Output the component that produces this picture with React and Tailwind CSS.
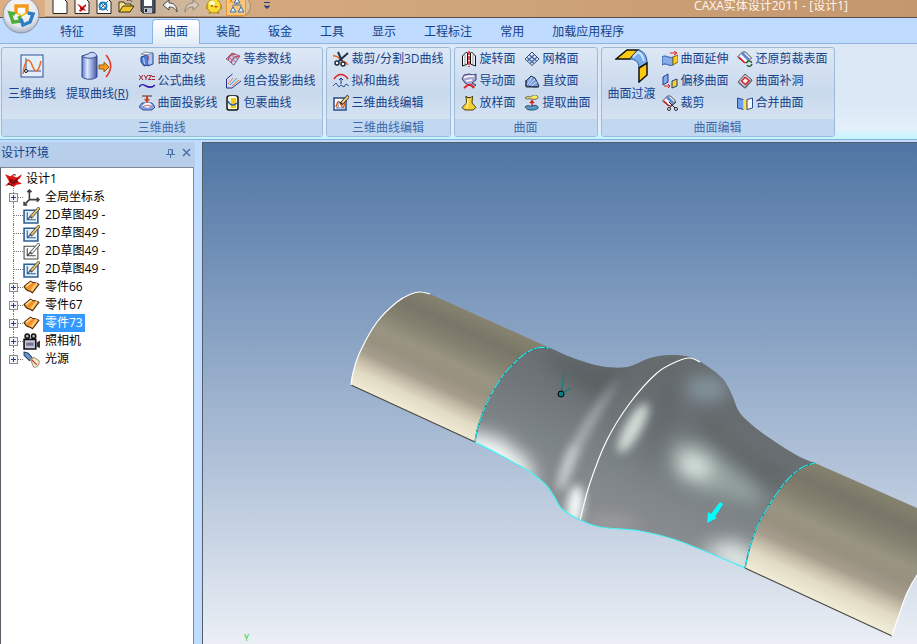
import { ChevronDown } from 'lucide-react';

// turns a list of points into a smooth curve through all of them
function curve(points) {
  let d = '';
  for (let i = 0; i < points.length - 1; i++) {
    const p0 = points[i - 1] || points[i];
    const p1 = points[i];
    const p2 = points[i + 1];
    const p3 = points[i + 2] || p2;
    d += ` C ${p1[0] + (p2[0] - p0[0]) / 6} ${p1[1] + (p2[1] - p0[1]) / 6}`;
    d += ` ${p2[0] - (p3[0] - p1[0]) / 6} ${p2[1] - (p3[1] - p1[1]) / 6}`;
    d += ` ${p2[0]} ${p2[1]}`;
  }
  return d;
}

const start = (points) => `M ${points[0][0]} ${points[0][1]}`;

const icons = {
  newDoc: (
    <path d="M1 0h10l4 4v11.500H1z" fill="#fdfdfd" stroke="#222" />
  ),
  newDesign: (
    <>
      <path d="M1 0h10l4 4v11.500H1z" fill="#fdfdfd" stroke="#222" />
      <path d="M3 6l3 1 2 2 4-3v2l-2 2 2 3-3-1-3 2-1-2 2-1-2-3z" fill="#d40b0b" />
      <path d="M6 10l3 1" stroke="#600" />
    </>
  ),
  newDrawing: (
    <>
      <path d="M1 0h10l4 4v11.500H1z" fill="#fdfdfd" stroke="#222" />
      <circle cx="7" cy="8" r="3.500" fill="none" stroke="#1583c5" strokeWidth="2" />
      <path d="M3 12l9-9M4 4l8 9" stroke="#28628e" />
    </>
  ),
  open: (
    <>
      <path d="M1 14V4h5l1 2h6v3" fill="#f7e38b" stroke="#3b3515" />
      <path d="M1 14l4-6h11l-4 6z" fill="#f3c52d" stroke="#3b3515" />
      <path d="M9 3c2-2 4-1 5 1" fill="none" stroke="#333" />
    </>
  ),
  save: (
    <>
      <path d="M1 1h14v14H3l-2-2z" fill="#4b5060" stroke="#22242c" />
      <path d="M4 2h8v6H4z" fill="#fff" />
      <path d="M4 10h8v5H4z" fill="#b9c0ce" />
      <path d="M5 11h2v3H5z" fill="#22242c" />
    </>
  ),
  undo: (
    <path d="M1 7l6-5v3c5 0 8 3 8 9-2-4-4-5-8-5v3z" fill="#f4f4f4" stroke="#4e4a4a" />
  ),
  redo: (
    <path d="M15 7L9 2v3c-5 0-8 3-8 9 2-4 4-5 8-5v3z" fill="#d9c9b9" stroke="#8f8579" />
  ),
  chick: (
    <>
      <path d="M1 11l-1-2 2-2M15 11l1-2-2-2M5 14l-2 2M11 14l2 2" stroke="#c08c12" strokeWidth="2" />
      <circle cx="8" cy="8" r="7" fill="#f8dc35" stroke="#b08c18" />
      <ellipse cx="6" cy="5" rx="3" ry="2" fill="#fffbd2" />
      <path d="M8 8h4l-2 2z" fill="#d5452a" />
      <path d="M6 7v2" stroke="#473a0c" />
    </>
  ),
  tree: (
    <>
      <path d="M9 3v4M5 7h8M5 7v4M13 7v4" fill="none" stroke="#4f79a8" />
      <path d="M9 0l3 5H6zM5 9l3 5H2zM13 9l3 5h-6z" fill="#d9ecf8" stroke="#3f6fa3" />
      <path d="M1 1l4 4M5 1L1 5" stroke="#e88a1a" />
    </>
  ),
  intersect: (
    <>
      <path d="M7 3l7-1v11l-5 2z" fill="#a8c5f5" stroke="#27408b" />
      <path d="M2 6l6-2c3 3-1 6 1 10l-4 1-3-4z" fill="#4f7fd8" stroke="#27408b" />
      <path d="M2 3l4-2 8 1-6 2z" fill="#f1f3fa" stroke="#8a90a5" />
      <path d="M4 7c2 1 0 4 2 6" fill="none" stroke="#d5e4ff" />
      <path d="M8 4c3 3-1 6 1 10" fill="none" stroke="#e3413a" />
    </>
  ),
  formula: (
    <>
      <path d="M0 2l4 5M4 2L0 7M5 2l2 3 2-3M7 5v2M9.500 2.500h3l-3 4h3M13 3.500h3M13 6.500h3" fill="none" stroke="#a31a2b" />
      <path d="M0 14c3-4 5-2 7-1s6 2 9-1" fill="none" stroke="#3414ad" strokeWidth="1.500" />
    </>
  ),
  project: (
    <>
      <path d="M0 12l3-4h10l3 4-3 3H4z" fill="#84a1e2" stroke="#3c4f94" />
      <path d="M3 11l3-3h5l2 2-4 3z" fill="#f0f4fd" />
      <path d="M4 12c2-2 5-2 8-1" stroke="#dd5b5b" fill="none" />
      <path d="M3 1h10" stroke="#6b2413" />
      <path d="M8 1v4" stroke="#c1401a" strokeWidth="2" />
      <path d="M5 4h6L8 8z" fill="#d0461c" />
    </>
  ),
  isoParam: (
    <>
      <path d="M1 8l6-6 8 3-6 9c-3-1-3-4-8-6z" fill="#d6cbe6" stroke="#7a6892" />
      <path d="M3 9c1-4 4-6 7-6M6 12c1-5 4-6 8-7" fill="none" stroke="#cf4747" strokeWidth="1.500" />
      <path d="M3 6l8 5M6 4l7 4" stroke="#8d7cb4" />
    </>
  ),
  comboProject: (
    <>
      <path d="M1.500 15V6l6-5M1.500 15H7l9-7" fill="none" stroke="#22328c" />
      <path d="M2 14V7l5-4M2 14h5l7-5z" fill="#dcd6f3" />
      <path d="M3 11l5-6" stroke="#e07a3a" />
      <path d="M5 12l7-7" stroke="#3ba2c4" />
      <path d="M7 13l7-6" stroke="#e07a3a" />
    </>
  ),
  wrap: (
    <>
      <rect x="2" y="1" width="11" height="14" rx="2" fill="#fbf7cf" stroke="#111" strokeWidth="1.500" />
      <path d="M6 3h5v10H6z" fill="#efc920" />
      <path d="M3 6c2 5 6 5 9 2" fill="none" stroke="#2e62a5" strokeWidth="1.500" />
      <ellipse cx="7.500" cy="2" rx="4" ry="1" fill="#fff" />
    </>
  ),
  cut3d: (
    <>
      <path d="M0 5c4-1 6 2 8 4s5 1 7 5" fill="none" stroke="#e16b1e" strokeWidth="1.500" />
      <path d="M5 1l4 9M15 2L6 10" stroke="#23324a" strokeWidth="2" />
      <circle cx="4" cy="12" r="2" fill="#fff" stroke="#1d2a3d" strokeWidth="1.500" />
      <circle cx="10" cy="13" r="2" fill="#fff" stroke="#1d2a3d" strokeWidth="1.500" />
    </>
  ),
  fit: (
    <>
      <path d="M1 6c4-6 10-6 14 0" fill="none" stroke="#e01f1f" strokeWidth="1.500" />
      <path d="M0 13l3-3 3 4 2-2 3 2 2-3 3 2" fill="none" stroke="#2d5490" />
      <path d="M8 11V5M6 7l2-2 2 2" fill="none" stroke="#1c3d86" />
    </>
  ),
  edit3d: (
    <>
      <rect x="1" y="3" width="12" height="12" fill="#fff" stroke="#2a4a86" strokeWidth="1.500" />
      <path d="M3 12c2-8 3-6 5-2s3 2 4-3" fill="none" stroke="#e1641a" strokeWidth="1.500" />
      <path d="M3 13h9M5 6v7" stroke="#5b7db5" />
      <path d="M15.500 1L8 9" stroke="#222" strokeWidth="3.500" />
      <path d="M15 1.500L9 8" stroke="#f5d27c" strokeWidth="2" />
    </>
  ),
  revolve: (
    <>
      <path d="M1.500 5l4-4 1 1v11l-5 2zM14.500 5l-4-4-1 1v11l5 2z" fill="#f3f6fc" stroke="#111" />
      <path d="M4 4v9M12 4v9" stroke="#999" />
      <path d="M8 0v16" stroke="#f01818" strokeWidth="1.500" strokeDasharray="4 1" />
    </>
  ),
  sweep: (
    <>
      <path d="M1 6l2-4 5-1 4 1 3-1v6l-4 3 4 2-3 2-8-4-2-3z" fill="#aaa6d6" stroke="#44406d" />
      <path d="M3 5c3-3 6-1 10-2M5 8l6-1" fill="none" stroke="#fff" strokeWidth="1.500" />
      <path d="M3 15l4-3h3l3 3" fill="none" stroke="#e3231f" strokeWidth="2" />
    </>
  ),
  loft: (
    <>
      <path d="M5 1l1 1.500h4L11.500 1 11 8l4 4.500L12 15H4l-3-2.500L5.500 8z" fill="#f4cf35" stroke="#4a3c08" />
      <path d="M7 4l-1 9" stroke="#fdf1a3" strokeWidth="1.500" />
    </>
  ),
  mesh: (
    <>
      <path d="M1 8l7-7 7 7-7 6.500z" fill="#e3ecfa" stroke="#3d4e70" />
      <path d="M3 6.500l7 6M5.500 4l7 6M3.500 10l7-6.500M6 12.500l7-6.500" stroke="#466ca8" strokeWidth="1.500" />
    </>
  ),
  ruled: (
    <>
      <path d="M2 8l5-5 4 2 4 8-3 1-10-1z" fill="#7aa0e0" stroke="#232f4b" />
      <path d="M3 12l5-8M5 12l6-6M7 13l6-4" stroke="#c9dafa" />
      <path d="M2 7v7h13" stroke="#232f4b" />
    </>
  ),
  extractFace: (
    <>
      <path d="M1 3c3-3 5 0 7-2s5-1 6 1-4 3-7 2-4 1-6-1z" fill="#f7ea5c" stroke="#666" />
      <path d="M8 5v6M6 8l2-2 2 2" fill="none" stroke="#e01f1f" strokeWidth="1.500" />
      <path d="M1 12c3-3 5 0 7-1s5-1 6 1-3 3-6 3-5 0-7-3z" fill="#5c9ac2" stroke="#1f4f71" />
    </>
  ),
  extend: (
    <>
      <path d="M0 6c4-3 7 2 11 0v8c-4 2-7-3-11 0z" fill="#86aeea" stroke="#274fa0" />
      <path d="M11 6l5-2v7l-5 3z" fill="#fbcf1c" stroke="#8a6a00" />
      <path d="M8 2h6M12 0l3 2-3 2" fill="none" stroke="#e01f1f" />
    </>
  ),
  offset: (
    <>
      <path d="M1 4l5-3v8l-5 3z" fill="#86aeea" stroke="#1f3d8c" />
      <path d="M10 8l5-2v7l-5 2z" fill="#fbcf1c" stroke="#1f3d8c" />
      <path d="M2 13h6M6 11l2 2-2 2" fill="none" stroke="#e01f1f" />
    </>
  ),
  trim: (
    <>
      <path d="M0.500 6l5-5h3l5 5-5 5-3-1z" fill="#f4f6fc" stroke="#444" />
      <path d="M5 2l6 6" stroke="#5f8ad4" strokeWidth="3" />
      <path d="M2 6l5 5" stroke="#e01f1f" strokeWidth="1.500" />
      <path d="M7 7l6 6M14 7l-7 6" stroke="#222" />
      <circle cx="7" cy="14" r="1.500" fill="#fff" stroke="#222" />
      <circle cx="14" cy="14" r="1.500" fill="#fff" stroke="#222" />
    </>
  ),
  restore: (
    <>
      <path d="M0.500 6l5-5h3l6 6-5 5-3-1z" fill="#fbfbff" stroke="#444" />
      <path d="M5 2l7 7" stroke="#5f8ad4" strokeWidth="3" />
      <path d="M2 6l6 6" stroke="#e01f1f" strokeWidth="1.500" />
      <path d="M9.500 12c1-3 5-2 5 0M15 13c-1 3-4 3-5 1" fill="none" stroke="#27622c" strokeWidth="1.500" />
    </>
  ),
  hole: (
    <>
      <path d="M1 9l7-8 7 6-7 8z" fill="#c4cbe0" stroke="#555" />
      <path d="M1 9l7 6M8 15l7-8" stroke="#6b6b76" strokeWidth="1.500" />
      <path d="M4.500 8L8 4.500l4 3-3.500 4z" fill="#fff" stroke="#d92222" strokeWidth="1.500" />
    </>
  ),
  merge: (
    <>
      <path d="M0.500 3l6 1.500v10l-6-1.500z" fill="#6c9ff0" stroke="#2b4b91" />
      <path d="M6 4.500h4v10H6z" fill="#fbcf1c" />
      <path d="M10 4.500L15.500 3v10L10 14.500z" fill="#f2f7ff" stroke="#2b4b91" />
      <path d="M8 4v10" stroke="#fdf09a" />
    </>
  ),
  design: (
    <>
      <path d="M0 3l5 2 3-2v2l3 1 5-3-2 4-3 2 5 3-5 1-3 2-3-2-5 1 4-4z" fill="#e01717" />
      <path d="M4 6l4 3 4-3v4l-4 3-4-3z" fill="#8d0d0d" />
      <path d="M8 3l2 1M3 12l4 2" stroke="#1b1b1b" />
    </>
  ),
  axes: (
    <path d="M6 1v9h9M6 10l-4 4M4 3l2-2 2 2M13 8l2 2-2 2M1 12v3h3" fill="none" stroke="#3f3f3f" strokeWidth="1.500" />
  ),
  sketch: (
    <>
      <path d="M1 3h13v12H1z" fill="#e3f0fa" stroke="#2d5f94" strokeWidth="1.500" />
      <path d="M4 5v7h8M4 12l4-4" fill="none" stroke="#2d5f94" />
      <path d="M15.500 0.500L7 10" stroke="#5a5346" strokeWidth="3" />
      <path d="M15 1L8 9" stroke="#f3cb72" strokeWidth="1.500" />
    </>
  ),
  sketchHidden: (
    <>
      <path d="M1 3h13v12H1z" fill="#fff" stroke="#444" />
      <path d="M4 5v7h8M4 12l4-4" fill="none" stroke="#444" />
      <path d="M15.500 0.500L7 10" stroke="#555" strokeWidth="3" />
      <path d="M15 1L8 9" stroke="#fff" strokeWidth="1.500" />
    </>
  ),
  part: (
    <>
      <path d="M1 7l6-5c3 3 5 0 8 3l-6 8c-3-3-5 0-8-6z" fill="#f59f2e" stroke="#4b2a0c" />
      <path d="M3 7l5-4M8 11l5-7" stroke="#fdd38a" strokeWidth="1.500" />
      <path d="M5 9l5-5" stroke="#ee7f3a" />
    </>
  ),
  camera: (
    <>
      <circle cx="4" cy="3" r="2" fill="#bbb" stroke="#111" strokeWidth="1.500" />
      <circle cx="10" cy="3" r="2" fill="#bbb" stroke="#111" strokeWidth="1.500" />
      <path d="M1 6h11v9H1z" fill="#c7c5dc" stroke="#111" strokeWidth="1.500" />
      <path d="M3 9h7v3H3z" fill="#77748f" />
      <path d="M13 9l3-2v7l-3-1z" fill="#333" />
    </>
  ),
  light: (
    <>
      <path d="M1 1l4 1 4 5-3 2-5-5z" fill="#6f97c9" stroke="#1f3f6d" />
      <path d="M7 8l3-2 5 3c1 4-2 7-5 6z" fill="#f6ecc9" stroke="#9f9778" />
      <path d="M8 8l5 5" stroke="#c43030" />
    </>
  ),
};

function Icon({ name, className = 'size-4' }) {
  return (
    <svg viewBox="0 0 16 16" className={`${className} shrink-0`} fill="none" aria-hidden="true">
      {icons[name]}
    </svg>
  );
}

const quickAccess = [
  ['newDoc', '新建'],
  ['newDesign', '新建设计'],
  ['newDrawing', '新建图纸'],
  ['open', '打开'],
  ['save', '保存'],
  ['undo', '撤销'],
  ['redo', '重做'],
  ['chick', '三维球'],
];

const tabs = ['特征', '草图', '曲面', '装配', '钣金', '工具', '显示', '工程标注', '常用', '加载应用程序'];

const treeItems = [
  { icon: 'axes', label: '全局坐标系', expandable: true },
  { icon: 'sketch', label: '2D草图49 -' },
  { icon: 'sketch', label: '2D草图49 -' },
  { icon: 'sketchHidden', label: '2D草图49 -' },
  { icon: 'sketch', label: '2D草图49 -' },
  { icon: 'part', label: '零件66', expandable: true },
  { icon: 'part', label: '零件67', expandable: true },
  { icon: 'part', label: '零件73', expandable: true, selected: true },
  { icon: 'camera', label: '照相机', expandable: true },
  { icon: 'light', label: '光源', expandable: true },
];

function Group({ title, children }) {
  return (
    <section className="flex shrink-0 flex-col overflow-hidden rounded-[3px] border border-[#9dbbd9] bg-linear-to-b from-[#dde8f5] via-[#c9d9ed] to-[#dce8f5]">
      <div className="flex px-[6px] pb-[5px]">{children}</div>
      <h2 className="h-[17px] bg-[#c1d8f0] text-center leading-[17px] text-[#3e6aaa]">{title}</h2>
    </section>
  );
}

function BigButton({ label, children }) {
  return (
    <button type="button" className="flex flex-col items-center whitespace-nowrap">
      <span className="flex h-9 items-center">{children}</span>
      <span className="leading-5">{label}</span>
    </button>
  );
}

function Column({ items }) {
  return (
    <div className="flex flex-col">
      {items.map(([icon, label]) => (
        <button key={label} type="button" className="flex h-[22px] items-center gap-[3px] whitespace-nowrap">
          <Icon name={icon} />
          {label}
        </button>
      ))}
    </div>
  );
}

function AppLogo() {
  return (
    <svg viewBox="0 0 38 38" className="size-[38px]" aria-hidden="true">
      <defs>
        <radialGradient id="orb" cx="0.5" cy="0.35" r="0.65">
          <stop offset="0" stopColor="#ffffff" />
          <stop offset="0.7" stopColor="#e4e7ee" />
          <stop offset="1" stopColor="#a9b1c2" />
        </radialGradient>
      </defs>
      <circle cx="19" cy="18" r="18" fill="url(#orb)" stroke="#8e95a8" />
      <g fill="none" strokeWidth="3.500">
        <path d="M14 17V9h11v8" stroke="#f39a1b" />
        <path d="M15 16l4.500 3 4.500-3" stroke="#f8c531" strokeWidth="2" />
        <path d="M13 17l-5-1 3 9 8-1-2-5" stroke="#4fae3c" />
        <path d="M26 16l5 1-3 8-7 3-2-6" stroke="#2a7dc6" />
      </g>
    </svg>
  );
}

function TitleBar() {
  return (
    <header className="flex h-[18px] items-end overflow-hidden border-b border-[#5d4c45] bg-linear-to-r from-[#dcae84] via-[#cfa57b] to-[#c4976d] pl-[45px]">
      <div className="flex shrink-0 items-end rounded-r-full border-r border-b border-[#a98c70] bg-linear-to-r from-[#dfc4a8] via-[#c9b29b] to-[#dcbd9a] pr-1 pl-[7px]">
        <div className="flex items-end gap-[6px] pb-[2px]">
          {quickAccess.map(([icon, label]) => (
            <button key={icon} type="button" aria-label={label}>
              <Icon name={icon} />
            </button>
          ))}
        </div>
        <button type="button" aria-label="设计树" className="ml-1 flex h-5 w-5 items-center justify-center border border-[#e39a3d] bg-[#fbc679]">
          <Icon name="tree" />
        </button>
      </div>
      <button type="button" aria-label="自定义快速访问工具栏" className="ml-3 flex flex-col items-center self-start pt-[2px] text-[#1d3f86]">
        <span className="h-px w-[6px] bg-[#1d3f86]" />
        <ChevronDown className="size-2" strokeWidth={5} fill="currentColor" />
      </button>
      <h1 className="ml-auto self-start pr-[69px] leading-3 whitespace-nowrap text-[#fff6ee]">
        CAXA实体设计2011 - [设计1]
      </h1>
    </header>
  );
}

function Ribbon() {
  return (
    <div className="flex gap-[3px] border-b border-[#8fb0da] bg-linear-to-b from-[#dce8f5] from-60% via-[#e3f0fb] via-90% to-[#bff6ff] px-px pt-[3px] pb-[2px] text-[#15428b]">
      <Group title="三维曲线">
        <div className="flex gap-[10px]">
          <BigButton label="三维曲线">
            <svg viewBox="0 0 24 24" className="size-6" fill="none" aria-hidden="true">
              <rect x="1" y="1" width="22" height="22" fill="#e4eef9" stroke="#2a5298" />
              <path d="M6 4v14M6 17h15" stroke="#2a5298" />
              <path d="M3 20C5 4 9 3 12 11s6 9 9-4" stroke="#ee6b23" strokeWidth="1.500" />
              <circle cx="6" cy="17" r="1.500" fill="#fff" stroke="#111" />
            </svg>
          </BigButton>
          <BigButton label={<>提取曲线(<u>R</u>)</>}>
            <svg viewBox="0 0 32 30" className="h-[30px] w-8" fill="none" aria-hidden="true">
              <defs>
                <linearGradient id="tube">
                  <stop offset="0" stopColor="#5a78cc" />
                  <stop offset="0.35" stopColor="#dfe9ff" />
                  <stop offset="1" stopColor="#3f58a8" />
                </linearGradient>
              </defs>
              <path d="M1 5v21c4 3 11 3 15 0V5z" fill="url(#tube)" stroke="#33488c" />
              <path d="M1 5l6-2c4-3 7-2 9 2-4 3-11 3-15 0z" fill="#c7d6f6" stroke="#33488c" />
              <path d="M25 4c6 7 6 15 0 22" stroke="#e13322" strokeWidth="1.500" />
              <path d="M18 14h5v-3l5 5-5 5v-3h-5z" fill="#f39b1c" stroke="#9a5d08" />
            </svg>
          </BigButton>
          <div className="flex gap-[7px]">
            <Column items={[['intersect', '曲面交线'], ['formula', '公式曲线'], ['project', '曲面投影线']]} />
            <Column items={[['isoParam', '等参数线'], ['comboProject', '组合投影曲线'], ['wrap', '包裹曲线']]} />
          </div>
        </div>
      </Group>
      <Group title="三维曲线编辑">
        <Column items={[['cut3d', '裁剪/分割3D曲线'], ['fit', '拟和曲线'], ['edit3d', '三维曲线编辑']]} />
      </Group>
      <Group title="曲面">
        <div className="flex gap-2">
          <Column items={[['revolve', '旋转面'], ['sweep', '导动面'], ['loft', '放样面']]} />
          <Column items={[['mesh', '网格面'], ['ruled', '直纹面'], ['extractFace', '提取曲面']]} />
        </div>
      </Group>
      <Group title="曲面编辑">
        <div className="flex gap-[6px]">
          <BigButton label="曲面过渡">
            <svg viewBox="0 0 34 34" className="size-[34px]" fill="none" aria-hidden="true">
              <path d="M1 10L12 1h11l-8 9z" fill="#fbc90f" stroke="#111" strokeWidth="1.500" />
              <path d="M15 10l8-9c6 1 9 6 9 13l-8 5c0-6-4-9-9-9z" fill="#79aceb" stroke="#2c5798" />
              <path d="M18 8l5-5c4 2 5 5 6 9" stroke="#c9e2ff" strokeWidth="2" />
              <path d="M24 19l8-5v12l-8 7z" fill="#fbc90f" stroke="#111" strokeWidth="1.500" />
            </svg>
          </BigButton>
          <div className="flex gap-2">
            <Column items={[['extend', '曲面延伸'], ['offset', '偏移曲面'], ['trim', '裁剪']]} />
            <Column items={[['restore', '还原剪裁表面'], ['hole', '曲面补洞'], ['merge', '合并曲面']]} />
          </div>
        </div>
      </Group>
    </div>
  );
}

function DesignTree() {
  return (
    <aside className="flex w-[195px] shrink-0 flex-col">
      <div className="flex h-[25px] items-center bg-[#b7cfea] pr-px pl-px text-[#15428b]">
        <h2 className="grow pb-[3px]">设计环境</h2>
        <button type="button" aria-label="自动隐藏" className="flex size-4 items-center justify-center pb-1">
          <svg viewBox="0 0 9 10" className="h-[10px] w-[9px]" fill="none" stroke="#4a70a9" aria-hidden="true">
            <path d="M2.500 6V1.500h4V6M6 2v4M0 6.500h9M4.500 7v3" />
          </svg>
        </button>
        <button type="button" aria-label="关闭" className="flex size-4 items-center justify-center pb-1">
          <svg viewBox="0 0 9 9" className="size-[9px]" fill="none" stroke="#4a70a9" strokeWidth="1.500" aria-hidden="true">
            <path d="M1 1l7 7M8 1L1 8" />
          </svg>
        </button>
      </div>
      <div className="mr-px grow border border-b-0 border-[#84888f] border-l-[#5a5f68] bg-white pt-[2px] text-black">
        <div className="flex h-[18px] items-center gap-1 pl-1">
          <Icon name="design" className="size-[17px]" />
          设计1
        </div>
        <ul>
          {treeItems.map((item, i) => (
            <li key={i} className="flex h-[18px] items-center">
              <span className="flex h-full w-[22px] shrink-0 items-center pl-2">
                {item.expandable ? (
                  <span className="flex h-full flex-col items-center">
                    <span className="grow border-l border-dotted border-[#777]" />
                    <button
                      type="button"
                      aria-label={`展开 ${item.label}`}
                      className="flex size-[9px] items-center justify-center border border-[#8e8e8e] bg-[#f4f4f8]"
                    >
                      <svg viewBox="0 0 5 5" className="size-[5px]" stroke="#27417c" aria-hidden="true">
                        <path d="M0 2.500h5M2.500 0v5" />
                      </svg>
                    </button>
                    <span
                      className={`grow border-l border-dotted ${
                        i === treeItems.length - 1 ? 'border-transparent' : 'border-[#777]'
                      }`}
                    />
                  </span>
                ) : (
                  <span className="ml-1 h-full border-l border-dotted border-[#777]" />
                )}
                <span className="grow border-t border-dotted border-[#777]" />
              </span>
              <Icon name={item.icon} className="size-[17px]" />
              <span className={`ml-[3px] px-[2px] leading-[18px] ${item.selected ? 'bg-[#3399ff] text-white' : ''}`}>
                {item.label}
              </span>
            </li>
          ))}
        </ul>
      </div>
    </aside>
  );
}

const leftEnd = [[351, 385], [353, 373], [360, 352], [377, 322], [397, 302], [411, 294], [420, 292], [430, 294]];
const leftSeam = [[475, 442], [478, 427], [487, 403], [502, 377], [522, 356], [537, 348], [550, 348]];
const upperEdge = [
  [550, 348], [573, 358], [600, 366], [627, 367], [650, 358], [670, 355], [690, 357], [707, 366],
  [723, 379], [732, 395], [740, 413], [757, 429], [780, 445], [800, 457], [815, 463],
];
const rightSeam = [[745, 568], [750, 547], [758, 525], [773, 499], [788, 479], [803, 467], [815, 463]];
const lowerEdge = [
  [475, 442], [500, 455], [530, 472], [546, 485], [555, 498], [562, 509], [580, 520], [600, 527],
  [640, 531], [673, 539], [707, 552], [745, 568],
];
const profile = [[580, 520], [590, 483], [607, 440], [630, 403], [657, 373], [678, 361], [690, 358], [700, 362]];
const rightEnd = [[892, 636], [898, 618], [907, 593], [919, 572], [935, 552]];

const reversed = (points) => [...points].reverse();

const bodyPath = `${start(leftSeam)}${curve(leftSeam)}${curve(upperEdge)}${curve(reversed(rightSeam))}${curve(reversed(lowerEdge))}Z`;
const leftTube = `${start(leftEnd)}${curve(leftEnd)} L 550 348 ${curve(reversed(leftSeam))}Z`;
const rightTube = `${start(rightSeam)}${curve(rightSeam)} L 935 516 L 935 552 ${curve(reversed(rightEnd))}Z`;

const tubeStops = (
  <>
    <stop offset="0" stopColor="#85836f" />
    <stop offset="0.16" stopColor="#797568" />
    <stop offset="0.3" stopColor="#858170" />
    <stop offset="0.46" stopColor="#999582" />
    <stop offset="0.58" stopColor="#979180" />
    <stop offset="0.7" stopColor="#a79d8d" />
    <stop offset="0.79" stopColor="#c9c0ac" />
    <stop offset="0.87" stopColor="#e1dac5" />
    <stop offset="1" stopColor="#f0ebd6" />
  </>
);

function Viewport() {
  return (
    <main className="min-w-0 grow overflow-hidden border-t border-l border-[#555f6c] bg-linear-to-b from-[#4f75a4] to-[#ebeff5]">
      <svg className="size-full" role="img" aria-label="零件73">
        <defs>
          <linearGradient id="leftShade" gradientUnits="userSpaceOnUse" x1="480" y1="317" x2="431" y2="422">
            {tubeStops}
          </linearGradient>
          <linearGradient id="rightShade" gradientUnits="userSpaceOnUse" x1="850" y1="478" x2="799" y2="591">
            {tubeStops}
          </linearGradient>
          <linearGradient id="bodyShade" gradientUnits="userSpaceOnUse" x1="680" y1="385" x2="622" y2="530">
            <stop offset="0" stopColor="#666b6e" />
            <stop offset="0.35" stopColor="#6f7578" />
            <stop offset="0.65" stopColor="#7d8488" />
            <stop offset="1" stopColor="#8b8e91" />
          </linearGradient>
          <filter id="soft" filterUnits="userSpaceOnUse" x="400" y="300" width="480" height="320" colorInterpolationFilters="sRGB">
            <feGaussianBlur stdDeviation="9" />
          </filter>
          <filter id="fine" filterUnits="userSpaceOnUse" x="400" y="300" width="480" height="320" colorInterpolationFilters="sRGB">
            <feGaussianBlur stdDeviation="5" />
          </filter>
          <clipPath id="bodyClip">
            <path d={bodyPath} />
          </clipPath>
        </defs>
        <g transform="translate(-203 -143)">
          <path d={leftTube} fill="url(#leftShade)" />
          <path d={rightTube} fill="url(#rightShade)" />
          <path d={bodyPath} fill="url(#bodyShade)" />
          <g clipPath="url(#bodyClip)">
            <g filter="url(#soft)">
              <path d="M540 350 L600 366 L635 368 L600 400 L560 375Z" fill="#5b6163" />
              <path d="M700 395 L735 440 L800 475 L775 492 L705 440Z" fill="#626769" />
              <path d="M665 375 L678 400 L640 480 L655 430Z" fill="#606568" />
              <path d="M460 430 L500 438 L530 462 L535 490 L460 458Z" fill="#f4fbf9" />
              <path d="M700 548 L735 540 L765 560 L745 585Z" fill="#e0e8e6" />
              <ellipse cx="707" cy="389" rx="22" ry="13" fill="#8496a0" />
              <path d="M672 440 L704 444 L760 490 L764 506 L700 490 L676 476Z" fill="#96a4a1" />
              <ellipse cx="694" cy="466" rx="19" ry="12" fill="#dde8e2" transform="rotate(25 694 466)" />
              <ellipse cx="612" cy="524" rx="24" ry="5" fill="#aeaaa8" />
            </g>
            <g filter="url(#fine)">
              <path d="M556 492 Q562 440 622 375 Q584 436 566 488Z" fill="#a9aeb2" />
              <ellipse cx="567" cy="466" rx="5" ry="25" fill="#cfd3d6" transform="rotate(19 567 466)" />
              <ellipse cx="575" cy="506" rx="8" ry="21" fill="#f4fbf8" transform="rotate(8 575 506)" />
              <ellipse cx="633" cy="428" rx="8" ry="28" fill="#d3dfd8" transform="rotate(29 633 428)" />
            </g>
          </g>
          <g fill="none" strokeWidth="1.200">
            <path d="M351 385L475 442M745 568L892 636" stroke="#4b4a43" />
            <path d={start(leftEnd) + curve(leftEnd)} stroke="#fff" />
            <path d={start(rightEnd) + curve(rightEnd)} stroke="#fff" />
            <path d={start(profile) + curve(profile)} stroke="#fff" />
            <path d={start(lowerEdge) + curve(lowerEdge)} stroke="#49f2f5" />
            {[leftSeam, rightSeam].map((seam) => (
              <g key={seam[0][0]}>
                <path d={start(seam) + curve(seam)} stroke="#1c4b50" />
                <path d={start(seam) + curve(seam)} stroke="#2fe6ea" strokeDasharray="11 1 6 1" />
              </g>
            ))}
            <path d="M561 394L564 374M561 394L571 388" stroke="#0b8080" />
          </g>
          <circle cx="561" cy="394" r="3" fill="#008080" stroke="#000" />
          <path d="M720 502l3 2-8 13 2 1-10 5 1-11 3 2z" fill="#00ffff" />
          <text x="244" y="641" fontSize="9" fill="#1fd01f">Y</text>
        </g>
      </svg>
    </main>
  );
}

export default function App() {
  return (
    <div className="flex h-screen flex-col overflow-hidden bg-[#bfdbff] font-['Open_Sans','Noto_Sans_CJK_SC',sans-serif] text-[12px] leading-4">
      <div className="relative">
        <TitleBar />
        <nav className="flex h-[26px] items-end border-b border-[#8db2e3] pl-[46px] text-[#15428b]">
          {tabs.map((tab) => (
            <button
              key={tab}
              type="button"
              className={
                tab === '曲面'
                  ? 'mx-[2px] -mb-px h-[25px] rounded-t-[4px] border border-b-0 border-[#8db2e3] bg-linear-to-b from-white to-[#e2edf9] px-[11px] whitespace-nowrap'
                  : 'h-[25px] px-[14px] pt-[2px] whitespace-nowrap'
              }
            >
              {tab}
            </button>
          ))}
        </nav>
        <button type="button" aria-label="应用程序菜单" className="absolute -top-[3px] left-[2px]">
          <AppLogo />
        </button>
      </div>
      <Ribbon />
      <div className="flex min-h-0 grow gap-[7px] pt-[2px]">
        <DesignTree />
        <Viewport />
      </div>
    </div>
  );
}
